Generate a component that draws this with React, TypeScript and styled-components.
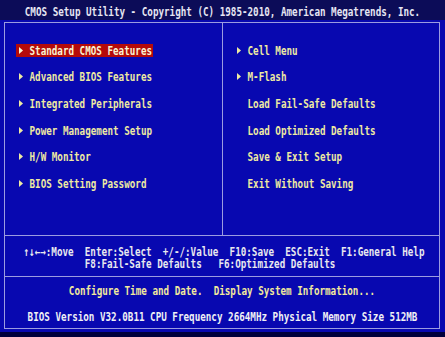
import React from 'react'
import styled, { createGlobalStyle } from 'styled-components'

const GlobalStyle = createGlobalStyle`
  html, body {
    margin: 0;
    padding: 0;
    background: #0808b0;
  }
  body {
    width: 445px;
    height: 337px;
    overflow: hidden;
  }
`

type MenuItem = { label: string; arrow: boolean; active?: boolean }

const leftItems: MenuItem[] = [
  { label: 'Standard CMOS Features', arrow: true, active: true },
  { label: 'Advanced BIOS Features', arrow: true },
  { label: 'Integrated Peripherals', arrow: true },
  { label: 'Power Management Setup', arrow: true },
  { label: 'H/W Monitor', arrow: true },
  { label: 'BIOS Setting Password', arrow: true },
]

const rightItems: MenuItem[] = [
  { label: 'Cell Menu', arrow: true },
  { label: 'M-Flash', arrow: true },
  { label: 'Load Fail-Safe Defaults', arrow: false },
  { label: 'Load Optimized Defaults', arrow: false },
  { label: 'Save & Exit Setup', arrow: false },
  { label: 'Exit Without Saving', arrow: false },
]

const helpLines = [
  '\u2191\u2193\u2190\u2192:Move  Enter:Select  +/-/:Value  F10:Save  ESC:Exit  F1:General Help',
  '           F8:Fail-Safe Defaults   F6:Optimized Defaults',
]

const Arrow = ({ hidden }: { hidden: boolean }) => (
  <S.Arrow $hidden={hidden} width="4" height="7" viewBox="0 0 4 7">
    <polygon points="0,0 4,3.5 0,7" fill="currentColor" />
  </S.Arrow>
)

const MenuList = ({ items }: { items: MenuItem[] }) => (
  <S.Column>
    {items.map((item) => (
      <S.Item key={item.label} $active={!!item.active}>
        <Arrow hidden={!item.arrow} />
        <S.Tall>{item.label}</S.Tall>
      </S.Item>
    ))}
  </S.Column>
)

const App = () => {
  return (
    <S.Screen>
      <GlobalStyle />
      <S.TitleBar>
        <S.Tall>CMOS Setup Utility - Copyright (C) 1985-2010, American Megatrends, Inc.</S.Tall>
      </S.TitleBar>
      <S.Frame>
        <S.Menu>
          <MenuList items={leftItems} />
          <MenuList items={rightItems} />
        </S.Menu>
        <S.Help>
          <S.HelpBlock>
            {helpLines.map((line) => (
              <S.HelpLine key={line}>
                <S.Tall>{line}</S.Tall>
              </S.HelpLine>
            ))}
          </S.HelpBlock>
        </S.Help>
        <S.Desc>
          <S.Tall>Configure Time and Date.  Display System Information...</S.Tall>
        </S.Desc>
        <S.Version>
          <S.Tall>BIOS Version V32.0B11 CPU Frequency 2664MHz Physical Memory Size 512MB</S.Tall>
        </S.Version>
      </S.Frame>
      <S.BottomBand />
    </S.Screen>
  )
}

export default App

const S = {
  Screen: styled.div`
    width: 445px;
    height: 337px;
    background: #0808b0;
    display: flex;
    flex-direction: column;
    font-family: 'DejaVu Sans Mono', 'Liberation Mono', monospace;
    font-weight: bold;
    font-size: 9.25px;
  `,
  Tall: styled.span`
    display: inline-block;
    white-space: pre;
    line-height: 11px;
    transform: scaleY(1.35);
  `,
  TitleBar: styled.header`
    height: 20px;
    flex-shrink: 0;
    background: #0c0c58;
    color: #e6e6f2;
    display: flex;
    align-items: center;
    justify-content: center;
    padding-top: 2px;
    box-sizing: border-box;
  `,
  Frame: styled.div`
    margin: 2px 5px 0 4px;
    height: 307px;
    box-sizing: border-box;
    border: 1px solid #9c9ce0;
    display: flex;
    flex-direction: column;
  `,
  Menu: styled.div`
    height: 213px;
    box-sizing: border-box;
    border-bottom: 1px solid #9c9ce0;
    display: grid;
    grid-template-columns: 218px 1fr;
    & > div:first-child {
      border-right: 1px solid #9c9ce0;
    }
  `,
  Column: styled.div`
    display: flex;
    flex-direction: column;
    align-items: flex-start;
    gap: 13.7px;
    padding: 20.5px 0 0 11px;
  `,
  Item: styled.div<{ $active: boolean }>`
    height: 13px;
    display: flex;
    align-items: center;
    gap: 6.5px;
    padding: 0 1px 0 3px;
    background: ${(p) => (p.$active ? '#b40a0a' : 'transparent')};
    color: ${(p) => (p.$active ? '#f8f4d4' : '#eeeaa2')};
  `,
  Arrow: styled.svg<{ $hidden: boolean }>`
    flex-shrink: 0;
    visibility: ${(p) => (p.$hidden ? 'hidden' : 'visible')};
  `,
  Help: styled.div`
    height: 41px;
    box-sizing: border-box;
    border-bottom: 1px solid #9c9ce0;
    padding-top: 9px;
    display: flex;
    justify-content: center;
    color: #e8e8ee;
  `,
  HelpBlock: styled.div`
    display: flex;
    flex-direction: column;
    padding-left: 4px;
  `,
  HelpLine: styled.div`
    height: 12px;
    display: flex;
    align-items: center;
  `,
  Desc: styled.div`
    height: 27px;
    display: flex;
    align-items: center;
    justify-content: center;
    color: #f2ea9c;
  `,
  Version: styled.div`
    flex: 1;
    display: flex;
    align-items: center;
    justify-content: center;
    padding: 1px 0 0 1px;
    color: #f0f0f4;
  `,
  BottomBand: styled.div`
    margin-top: 3px;
    flex: 1;
    background: #00003c;
  `,
}
